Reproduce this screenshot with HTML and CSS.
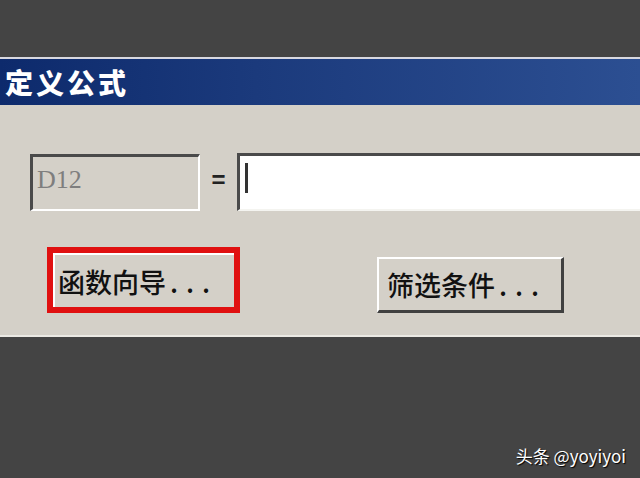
FILE: index.html
```html
<!DOCTYPE html>
<html lang="zh">
<head>
<meta charset="utf-8">
<link rel="stylesheet" href="styles.css">
</head>
<body>
<div class="page">
  <div class="dialog">
    <div class="titlebar">定义公式</div>
    <div class="content">
      <div class="row-fields">
        <div class="cell-ref">D12</div>
        <div class="equals">=</div>
        <div class="formula"><span class="caret"></span></div>
      </div>
      <div class="row-buttons">
        <div class="btn btn-wizard"><span class="label">函数向导<span class="dots">...</span></span></div>
        <div class="btn btn-filter"><span class="label">筛选条件<span class="dots">...</span></span></div>
      </div>
    </div>
  </div>
  <div class="footer">
    <span class="watermark">头条 @yoyiyoi</span>
  </div>
</div>
</body>
</html>
```
FILE: styles.css
```css
html, body {
  margin: 0;
  padding: 0;
  background: #444444;
  overflow: hidden;
}
.page {
  width: 640px;
  height: 478px;
  display: flex;
  flex-direction: column;
  font-family: "Noto Sans CJK SC", "Noto Sans", sans-serif;
}
.dialog {
  margin-top: 57px;
  border-top: 2px solid #d8d8e0;
}
.titlebar {
  height: 46px;
  background: linear-gradient(90deg, #0d2a6c 0%, #1b3a7c 40%, #2c4f92 100%);
  color: #ffffff;
  font-size: 28px;
  font-weight: 900;
  line-height: 46px;
  padding-left: 5px;
  letter-spacing: 3px;
}
.content {
  background: #d4d0c8;
  height: 232px;
  border-bottom: 2px solid #ebe9e4;
  box-sizing: border-box;
  padding-top: 48px;
}
.row-fields {
  display: flex;
  align-items: center;
  height: 58px;
}
.cell-ref {
  margin-left: 30px;
  width: 170px;
  height: 57px;
  box-sizing: border-box;
  border-top: 3px solid #4a4a4a;
  border-left: 3px solid #4a4a4a;
  border-right: 2px solid #ffffff;
  border-bottom: 2px solid #ffffff;
  background: #d4d0c8;
  font-family: "Liberation Serif", serif;
  font-size: 26px;
  color: #7e7e7e;
  padding-left: 4px;
  line-height: 46px;
}
.equals {
  width: 37px;
  text-align: center;
  font-family: "Liberation Sans", sans-serif;
  font-size: 24px;
  font-weight: bold;
  color: #222;
  margin-top: -4px;
}
.formula {
  flex: 1;
  height: 58px;
  box-sizing: border-box;
  border-top: 3px solid #4a4a4a;
  border-left: 3px solid #4a4a4a;
  border-bottom: 2px solid #f4f4f0;
  background: #ffffff;
  padding-left: 5px;
  padding-top: 7px;
}
.caret {
  display: block;
  width: 3px;
  height: 30px;
  background: #333;
}
.row-buttons {
  display: flex;
  align-items: flex-start;
  margin-top: 36px;
}
.btn {
  box-sizing: border-box;
  display: flex;
  align-items: center;
  color: #111;
  font-size: 27px;
  font-weight: 500;
}
.dots {
  letter-spacing: 8px;
  margin-left: 4px;
}
.btn-wizard {
  margin-left: 47px;
  width: 193px;
  height: 66px;
  border: 6px solid #e01010;
  box-shadow: inset 2px 2px 0 #ffffff;
  padding-left: 5px;
  padding-top: 2px;
}
.btn-filter {
  margin-left: 137px;
  margin-top: 10px;
  width: 187px;
  height: 56px;
  border-top: 2px solid #ffffff;
  border-left: 2px solid #ffffff;
  border-right: 3px solid #404040;
  border-bottom: 3px solid #404040;
  padding-left: 8px;
}
.footer {
  flex: 1;
  display: flex;
  justify-content: flex-end;
  align-items: flex-end;
  padding: 0 14px 10px 0;
}
.watermark {
  color: #ffffff;
  font-size: 17px;
  font-family: "Noto Sans CJK SC", "Liberation Sans", sans-serif;
  text-shadow: 1px 1px 1px #000;
}
```
